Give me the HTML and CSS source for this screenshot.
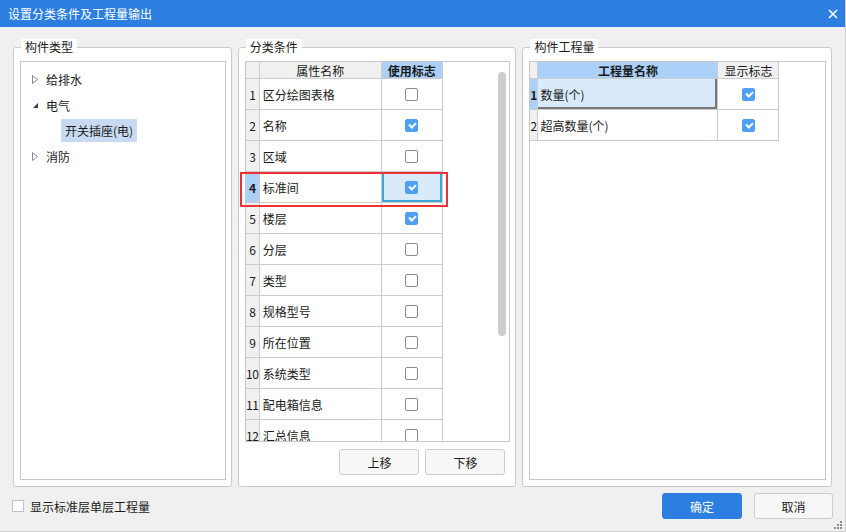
FILE: index.html
```html
<!DOCTYPE html>
<html lang="zh-CN">
<head>
<meta charset="utf-8">
<title>设置分类条件及工程量输出</title>
<link rel="stylesheet" href="styles.css">
</head>
<body>
<div class="window">
  <div class="titlebar">
    <span class="title">设置分类条件及工程量输出</span>
    <svg class="close" width="10" height="10" viewBox="0 0 10 10"><path d="M1 1 L9 9 M9 1 L1 9" stroke="#fff" stroke-width="1.6" fill="none"/></svg>
  </div>

  <div class="main">
    <section class="panel panel-left">
      <span class="legend">构件类型</span>
      <div class="box tree">
        <div class="tree-item"><svg class="tri" width="6" height="9" viewBox="0 0 6 9"><path d="M0.5 0.5 L5.5 4.5 L0.5 8.5 Z" fill="none" stroke="#8a8a8a" stroke-width="1"/></svg><span>给排水</span></div>
        <div class="tree-item"><svg class="tri" width="6" height="9" viewBox="0 0 6 9"><path d="M6 2 L6 7 L1 7 Z" fill="#404040"/></svg><span>电气</span></div>
        <div class="tree-item child"><span class="sel">开关插座(电)</span></div>
        <div class="tree-item"><svg class="tri" width="6" height="9" viewBox="0 0 6 9"><path d="M0.5 0.5 L5.5 4.5 L0.5 8.5 Z" fill="none" stroke="#8a8a8a" stroke-width="1"/></svg><span>消防</span></div>
      </div>
    </section>

    <section class="panel panel-mid">
      <span class="legend">分类条件</span>
      <div class="box grid">
        <div class="cols">
          <div class="row head">
            <div class="c rh"></div>
            <div class="c name center">属性名称</div>
            <div class="c flag center hl">使用标志</div>
          </div>
          <div class="row"><div class="c rh">1</div><div class="c name">区分绘图表格</div><div class="c flag"><span class="cb"></span></div></div>
          <div class="row"><div class="c rh">2</div><div class="c name">名称</div><div class="c flag"><span class="cb on"></span></div></div>
          <div class="row"><div class="c rh">3</div><div class="c name">区域</div><div class="c flag"><span class="cb"></span></div></div>
          <div class="row"><div class="c rh cur">4</div><div class="c name">标准间</div><div class="c flag focus"><span class="cb on"></span></div></div>
          <div class="row"><div class="c rh">5</div><div class="c name">楼层</div><div class="c flag"><span class="cb on"></span></div></div>
          <div class="row"><div class="c rh">6</div><div class="c name">分层</div><div class="c flag"><span class="cb"></span></div></div>
          <div class="row"><div class="c rh">7</div><div class="c name">类型</div><div class="c flag"><span class="cb"></span></div></div>
          <div class="row"><div class="c rh">8</div><div class="c name">规格型号</div><div class="c flag"><span class="cb"></span></div></div>
          <div class="row"><div class="c rh">9</div><div class="c name">所在位置</div><div class="c flag"><span class="cb"></span></div></div>
          <div class="row"><div class="c rh">10</div><div class="c name">系统类型</div><div class="c flag"><span class="cb"></span></div></div>
          <div class="row"><div class="c rh">11</div><div class="c name">配电箱信息</div><div class="c flag"><span class="cb"></span></div></div>
          <div class="row"><div class="c rh">12</div><div class="c name">汇总信息</div><div class="c flag"><span class="cb"></span></div></div>
        </div>
        <div class="vscroll"><div class="thumb"></div></div>
      </div>
      <div class="btnrow">
        <button class="btn">上移</button>
        <button class="btn">下移</button>
      </div>
      <div class="redmark"></div>
    </section>

    <section class="panel panel-right">
      <span class="legend">构件工程量</span>
      <div class="box qgrid">
        <div class="row head">
          <div class="c rh2"></div>
          <div class="c qname center hl bold">工程量名称</div>
          <div class="c flag center">显示标志</div>
        </div>
        <div class="row"><div class="c rh2 cur">1</div><div class="c qname curcell">数量(个)</div><div class="c flag"><span class="cb on"></span></div></div>
        <div class="row"><div class="c rh2">2</div><div class="c qname">超高数量(个)</div><div class="c flag"><span class="cb on"></span></div></div>
      </div>
    </section>
  </div>

  <div class="bottombar">
    <label class="opt"><span class="cb plain"></span><span>显示标准层单层工程量</span></label>
    <div class="actions">
      <button class="btn primary">确定</button>
      <button class="btn cancel">取消</button>
    </div>
  </div>

  <svg class="grip" width="9" height="9" viewBox="0 0 9 9">
    <rect x="6" y="0" width="2" height="2" fill="#8c8c8c"/>
    <rect x="3" y="3" width="2" height="2" fill="#8c8c8c"/>
    <rect x="6" y="3" width="2" height="2" fill="#8c8c8c"/>
    <rect x="0" y="6" width="2" height="2" fill="#8c8c8c"/>
    <rect x="3" y="6" width="2" height="2" fill="#8c8c8c"/>
    <rect x="6" y="6" width="2" height="2" fill="#8c8c8c"/>
  </svg>
</div>
</body>
</html>
```
FILE: styles.css
```css
* { box-sizing: border-box; }
html, body { margin: 0; padding: 0; }
body {
  font-family: "Noto Sans CJK SC", "Noto Sans", sans-serif;
  font-size: 12px;
  color: #1a1a1a;
  background: #f0f0f0;
}
.window {
  position: relative;
  width: 846px;
  height: 532px;
  background: #f0f0f0;
  overflow: hidden;
  border-right: 1px solid #cfcfcf;
  border-bottom: 1px solid #cfcfcf;
}
.titlebar {
  height: 27px;
  background: #2c7fe0;
  color: #fff;
  display: flex;
  align-items: center;
  justify-content: space-between;
  padding: 0 8px 0 8px;
  margin-right: -1px;
}
.title { font-size: 12px; line-height: 1; }
.close { display: block; }

.main {
  display: flex;
  gap: 6px;
  padding: 20px 13px 0 13px;
  height: 460px;
}
.panel {
  position: relative;
  height: 440px;
  background: #fff;
  border: 1px solid #cbcbcb;
  border-radius: 3px;
  padding: 13px 5px 6px 6px;
  display: flex;
  flex-direction: column;
}
.panel-left { width: 219px; }
.panel-mid { width: 279px; }
.panel-right { width: 310px; }
.legend {
  position: absolute;
  top: -9px;
  left: 7px;
  background: #fff;
  padding: 0 4px 0 4px;
  line-height: 16px;
  font-size: 12px;
}
.box {
  border: 1px solid #c8c8c8;
  background: #fff;
}
.tree {
  flex: 1;
  padding-top: 4px;
}
.tree-item {
  height: 26px;
  display: flex;
  align-items: center;
  padding-left: 11px;
}
.tree-item .tri { margin-right: 8px; display: block; }
.tree-item.child { padding-left: 40px; height: 25px; }
.sel {
  background: #c7daf1;
  padding: 0 4px;
  line-height: 23px;
}

/* grids */
.grid {
  height: 381px;
  display: flex;
  justify-content: space-between;
  overflow: hidden;
}
.row {
  display: flex;
  height: 31px;
  border-bottom: 1px solid #c9ccd2;
}
.row.head { height: 17px; }
.c {
  display: flex;
  align-items: center;
  border-right: 1px solid #c9ccd2;
  white-space: nowrap;
  overflow: visible;
}
.rh {
  width: 14px;
  background: #f0f0f0;
  justify-content: center;
  font-size: 12px;
  letter-spacing: -0.5px;
}
.rh2 {
  width: 8px;
  background: #f0f0f0;
  justify-content: center;
}
.name { width: 122px; padding-left: 3px; }
.qname { width: 180px; padding-left: 2px; }
.flag { width: 61px; justify-content: center; }
.center { justify-content: center; padding-left: 0; }
.head .c { background: #f0f0f0; }
.head .c.hl { background: #abd1f9; font-weight: bold; }
.bold { font-weight: bold; }
.rh.cur, .rh2.cur { background: #abd1f9; font-weight: bold; }
.focus {
  background: #d9eafb;
  box-shadow: inset 0 0 0 2px #3ea3d6;
}
.curcell {
  background: #d9eafb;
  box-shadow: inset -2px -2px 0 #777;
}

.vscroll {
  width: 13px;
  padding-top: 10px;
}
.thumb {
  width: 8px;
  height: 264px;
  margin-left: 2px;
  background: #cdcdcd;
  border-radius: 4px;
}

.cb {
  display: inline-block;
  width: 13px;
  height: 13px;
  border: 1px solid #8a8a8a;
  border-radius: 2px;
  background: #fff;
  position: relative;
}
.cb.on {
  background: #4f9ff2;
  border-color: #4f9ff2;
}
.cb.on::after {
  content: "";
  position: absolute;
  left: 3px;
  top: 2px;
  width: 5px;
  height: 3px;
  border-left: 2px solid #fff;
  border-bottom: 2px solid #fff;
  transform: rotate(-45deg);
}
.cb.plain { border-color: #c4c4c4; width: 12px; height: 12px; border-radius: 0; }

.btnrow {
  display: flex;
  justify-content: flex-end;
  gap: 6px;
  margin-top: 7px;
  padding-right: 5px;
}
.btn {
  font-family: inherit;
  font-size: 12px;
  color: #1a1a1a;
  width: 80px;
  height: 26px;
  background: #f7f7f7;
  border: 1px solid #c8ccd4;
  border-radius: 3px;
  padding: 0;
}
.redmark {
  position: absolute;
  left: 1px;
  top: 124px;
  width: 208px;
  height: 35px;
  border: 2px solid #ec3237;
}

.qgrid {
  flex: 1;
  overflow: hidden;
}
.qgrid .row { width: 249px; }

.bottombar {
  display: flex;
  align-items: center;
  justify-content: space-between;
  padding: 6px 12px 0 12px;
}
.opt {
  display: flex;
  align-items: center;
  gap: 6px;
}
.actions { display: flex; gap: 12px; }
.btn.primary {
  background: #2c7fe0;
  border-color: #2c7fe0;
  color: #fff;
}
.btn.cancel { width: 79px; }
.grip {
  position: absolute;
  right: 2px;
  bottom: 1px;
}
```
